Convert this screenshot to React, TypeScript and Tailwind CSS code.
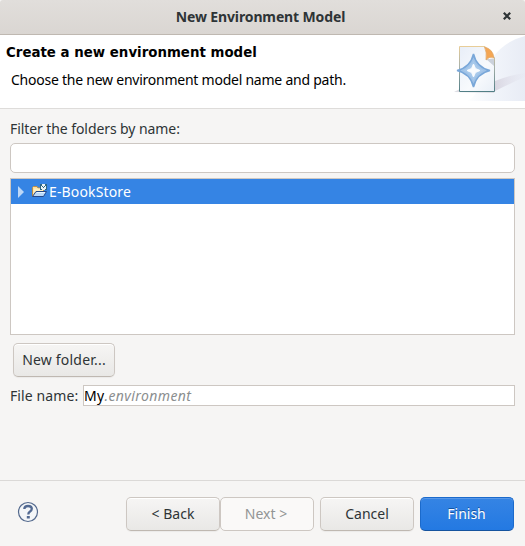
import React from "react";

function WizardBanner() {
  return (
    <svg width="75" height="66" viewBox="450 35 75 66" className="shrink-0" aria-hidden="true">
      <defs>
        <linearGradient id="wave" x1="0" x2="1" y1="0" y2="0">
          <stop offset="0" stopColor="#ffffff" />
          <stop offset="0.5" stopColor="#f1f4fa" />
          <stop offset="1" stopColor="#e8ecf5" />
        </linearGradient>
        <linearGradient id="shade" x1="0" x2="1">
          <stop offset="0" stopColor="#cbc5d3" />
          <stop offset="1" stopColor="#e2e2ee" stopOpacity="0.2" />
        </linearGradient>
        <linearGradient id="edge" x1="0" x2="0" y1="0" y2="1">
          <stop offset="0" stopColor="#e8cd98" />
          <stop offset="0.45" stopColor="#a7b0a9" />
          <stop offset="1" stopColor="#527f86" />
        </linearGradient>
        <linearGradient id="paper" x1="0" x2="1" y1="0" y2="1">
          <stop offset="0" stopColor="#e8eef8" />
          <stop offset="0.6" stopColor="#f8fafd" />
          <stop offset="1" stopColor="#e9eff7" />
        </linearGradient>
      </defs>
      <path d="M465 101C480 100 482 70 493 57Q505 41 525 36V101Z" fill="url(#wave)" />
      <path d="M495 81Q510 75 525 73V77Q511 83 495 91Z" fill="url(#shade)" opacity=".65" />
      <path d="M454 92L460 89H496L494 93Z" fill="#dddde3" />
      <path d="M459.5 46.5H485L494.5 58V91.5H459.5Z" fill="url(#paper)" stroke="url(#edge)" />
      <path d="M486 59L494 59L494 66Z" fill="#cbd1db" />
      <path d="M484.5 47Q493 49 494 58Q489 56 486 60Q487 52 484.5 47Z" fill="#f4a654" stroke="#dca564" strokeWidth=".7" />
      <path d="M473.500 54Q476.500 67.500 490 70.500Q476.500 73.500 473.500 87Q470.500 73.500 457 70.500Q470.500 67.500 473.500 54Z" fill="#79a7d9" stroke="#79a7d9" strokeWidth="1.500" strokeLinejoin="bevel" />
      <path d="M473.500 59Q477 67 485 70.500Q477 74 473.500 82Q470 74 462 70.500Q470 67 473.500 59Z" fill="#a8c9eb" stroke="#a0c2e7" strokeWidth="1.500" />
      <path d="M473.500 64L475.500 68.500L480 70.500L475.500 72.500L473.500 77L471.500 72.500L467 70.500L471.500 68.500Z" fill="#f9fbfe" stroke="#f9fbfe" />
    </svg>
  );
}

function ProjectIcon() {
  return (
    <svg width="16" height="16" viewBox="0 0 16 16" className="shrink-0" aria-hidden="true">
      <path d="M1.500 13.500V4.500L2.500 3.500H6L7 5H12.500V12Z" fill="#f9dfa2" stroke="#bd8c44" />
      <path d="M3 5.500H12V8H5L2 11Z" fill="#fff0bf" />
      <path d="M1.500 13.500L5 8.500H15.500L12.500 13.500Z" fill="#b9d9fa" stroke="#24498c" />
      <path d="M6 9.500H14" stroke="#e6f4ff" />
      <path d="M9 1H16V7H9Z" fill="#e8f2f4" />
      <path d="M9 1H11V2H9ZM14 1H16V2H14ZM9 2H10V6H9ZM15 2H16V6H15ZM10 2H11V3H10ZM14 2H15V3H14ZM11 3H12V4H11ZM13 3H14V4H13ZM12 4H13V5H12ZM9 6H11V7H9ZM14 6H16V7H14Z" fill="#2d6683" />
    </svg>
  );
}

const button =
  "flex h-[34px] items-center justify-center rounded-[5px] border whitespace-pre";
const normal =
  "border-[#cdc7c2] border-b-[#bfb8b1] bg-linear-to-b from-[#f6f5f4] to-[#e9e8e6] shadow-[inset_0_1px_#ffffff,0_1px_1px_#0000000c]";

export default function App() {
  return (
    <div className="flex h-[546px] w-[525px] flex-col overflow-hidden bg-[#f6f5f4] font-['Noto_Sans',sans-serif] text-[14px] leading-5 text-[#2e3436]">
      <header className="grid h-[35px] shrink-0 grid-cols-[36px_1fr_36px] items-center rounded-t-[3px] border-b border-[#bfb8b1] bg-linear-to-b from-[#e1dedb] to-[#dad6d2]">
        <h1 className="col-start-2 pr-1 text-center text-[14px] font-bold tracking-[-0.13px] whitespace-nowrap">New Environment Model</h1>
        <button aria-label="Close" className="flex h-full items-center justify-center pb-[2px]">
          <svg width="8" height="8" viewBox="0 0 8 8"><path d="M.8 .8L7.200 7.200M7.200 .8L.8 7.200" stroke="#2e3436" strokeWidth="2.200" /></svg>
        </button>
      </header>

      <section className="flex h-[74px] shrink-0 justify-between border-b border-[#dedcda] bg-white text-black">
        <div className="pt-[8px] pl-[6px]">
          <h2 className="font-['DejaVu_Sans',sans-serif] text-[13.330px] font-bold tracking-[0.02px] whitespace-nowrap">Create a new environment model</h2>
          <p className="mt-[7px] pl-[5px] tracking-[-0.24px] whitespace-nowrap">Choose the new environment model name and path.</p>
        </div>
        <WizardBanner />
      </section>

      <main className="flex flex-1 flex-col px-[10px] pt-[10px]">
        <label htmlFor="filter" className="h-6 tracking-[-0.08px]">Filter the folders by name:</label>
        <input id="filter" className="h-[30px] shrink-0 rounded-[5px] border border-[#cdc7c2] bg-white px-2 outline-none" />
        <div className="mt-[5px] h-[157px] shrink-0 border border-[#cdc7c2] bg-white">
          <div className="flex h-[25px] items-center bg-[#3584e4] pl-[7px] text-white">
            <svg width="6" height="12" viewBox="0 0 6 12"><path d="M0 0L6 6L0 12Z" fill="#bcd7f7" /></svg>
            <span className="ml-[7px] flex -translate-y-px"><ProjectIcon /></span>
            <span className="ml-[2px] tracking-[0.14px]">E-BookStore</span>
          </div>
        </div>
        <button className={`${button} ${normal} mt-[8px] ml-[3px] w-[102px] shrink-0 tracking-[0.2px]`}>New folder...</button>
        <div className="mt-[8px] flex items-center">
          <span className="w-[73px] tracking-[0.1px] whitespace-nowrap">File name:</span>
          <div className="flex h-[21px] flex-1 items-center border border-[#cdc7c2] bg-white">
            <span className="tracking-[0.3px] text-black">My</span><span className="tracking-[0.4px] text-[#8b8e8f] italic">.environment</span>
          </div>
        </div>
      </main>

      <footer className="flex h-[66px] shrink-0 items-start border-t border-[#dbd9d7] pt-4 pr-[11px] pl-[17px]">
        <svg width="22" height="22" viewBox="0 0 22 22" className="mt-1" aria-label="Help">
          <circle cx="11" cy="11" r="9.500" fill="#f4f6f8" stroke="#53698d" strokeWidth="1.200" />
          <path d="M7.300 8Q7.500 5 11 5Q14.800 5 14.800 7.800Q14.800 9.500 12.800 10.700Q11.300 11.600 11.300 13.500" fill="none" stroke="#536a92" strokeWidth="2.300" />
          <path d="M9.800 15H12.800V17.500H9.800Z" fill="#536a92" />
        </svg>
        <div className="ml-auto flex">
          <button className={`${button} ${normal} w-[94px]`}>&lt; Back</button>
          <button disabled className={`${button} w-[94px] border-[#cdc7c2] bg-[#faf9f8] pr-[2px] text-[#929595]`}>Next &gt;</button>
          <button className={`${button} ${normal} ml-[6px] w-[94px]`}>Cancel</button>
          <button className={`${button} ml-[6px] w-[94px] border-[#1b6acb] border-b-[#15539e] bg-linear-to-b from-[#3584e4] to-[#2379e2] pr-px text-white shadow-[inset_0_1px_#5998e8] [text-shadow:0_-1px_#15539e]`}>Finish</button>
        </div>
      </footer>
    </div>
  );
}
